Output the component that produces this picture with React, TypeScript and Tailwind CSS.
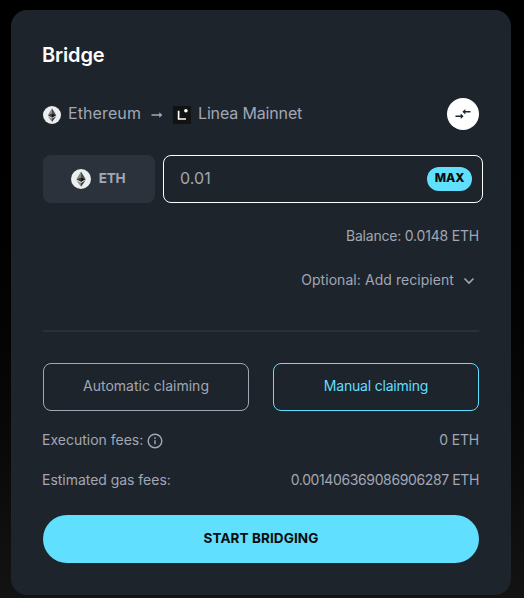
function EthIcon({ size }: { size: number }) {
  return (
    <svg width={size} height={size} viewBox="0 0 32 32" className="block shrink-0">
      <circle cx="16" cy="16" r="16" fill="#eceff0" />
      <path d="M16 4 8.5 16.4 16 13z" fill="#8a8a8a" />
      <path d="M16 4v9l7.5 3.4z" fill="#4a4a4a" />
      <path d="M8.5 16.4 16 13v7.9z" fill="#3c3c3b" />
      <path d="M16 13v7.9l7.5-4.5z" fill="#141414" />
      <path d="M8.5 18 16 22.3V28.5z" fill="#8a8a8a" />
      <path d="M23.5 18 16 22.3V28.5z" fill="#3c3c3b" />
    </svg>
  );
}

function LineaIcon() {
  return (
    <svg width="18" height="18" viewBox="0 0 18 18" className="block shrink-0">
      <rect width="18" height="18" fill="#121212" />
      <path d="M5.6 4.8v8.2h7.4" fill="none" stroke="#fff" strokeWidth="1.7" />
      <circle cx="12.9" cy="4.8" r="1.8" fill="#fff" />
    </svg>
  );
}

function Card() {
  return (
    <main className="h-[585px] w-[500px] rounded-2xl bg-[#1e242b] px-8 pt-8 text-[14px] leading-5 text-[#a1a7b6]">
      <h1 className="-ml-px h-[26px] text-[20px] leading-[26px] font-semibold tracking-[-0.15px] text-white">Bridge</h1>

      <div className="mt-[30px] flex h-8 items-center">
        <span className="pt-px"><EthIcon size={18} /></span>
        <span className="-mt-0.5 ml-[7px] w-[73px] text-[16px] tracking-[0.1px] whitespace-nowrap">Ethereum</span>
        <svg width="12" height="8" viewBox="0 0 12 8" className="mt-px ml-[10px] shrink-0" fill="currentColor">
          <path d="M.5 3.3h7.8V1.3L11.4 4 8.3 6.7V4.7H.5z" />
        </svg>
        <span className="ml-[10px] pt-px"><LineaIcon /></span>
        <span className="-mt-0.5 ml-[7px] text-[16px] tracking-[-0.15px] whitespace-nowrap">Linea Mainnet</span>
        <button className="ml-auto flex size-8 items-center justify-center rounded-full bg-white text-[#1e242b]">
          <svg width="16" height="16" viewBox="0 0 16 16" fill="none" stroke="currentColor" strokeWidth="1.5">
            <path d="M.5 10.3h6M15.5 5.7h-6" />
            <path d="M5.7 7.5v5.6l2.9-2.8zM10.3 2.9v5.6L7.4 5.7z" fill="currentColor" stroke="none" />
          </svg>
        </button>
      </div>

      <div className="mt-[25px] -mr-1 flex h-12 gap-2">
        <div className="flex w-28 items-center justify-center gap-2 rounded-lg bg-[#2c323b] pr-0.5 font-bold">
          <EthIcon size={20} />
          <span className="-mt-0.5 text-[13.5px] tracking-[-0.2px]">ETH</span>
        </div>
        <div className="flex flex-1 items-center justify-between rounded-lg border border-white pr-[10px] pl-4">
          <span className="-mt-0.5 text-[16px] tracking-[0.1px]">0.01</span>
          <button className="h-6 w-[45px] rounded-full bg-[#61dfff] pb-0.5 text-[12px] font-extrabold tracking-[-0.1px] text-[#0b0b0b]">MAX</button>
        </div>
      </div>

      <p className="mt-[23px] text-right tracking-[-0.2px]">Balance: 0.0148 ETH</p>
      <div className="mt-6 flex h-5 items-center justify-end pr-1">
        <span className="tracking-[0.06px]">Optional: Add recipient</span>
        <svg width="12" height="8" viewBox="0 0 12 8" fill="none" stroke="currentColor" strokeWidth="1.6" className="mt-0.5 ml-[9px]">
          <path d="m1.5 1.5 4.5 4.5 4.5-4.5" />
        </svg>
      </div>
      <hr className="mt-10 border-t-2 border-[#2c3038]" />

      <div className="mt-[31px] flex h-12 gap-6">
        <button className="flex-1 rounded-lg border border-[#a1a7b6] pb-0.5">Automatic claiming</button>
        <button className="flex-1 rounded-lg border border-[#61dfff] pb-0.5 tracking-[-0.2px] text-[#61dfff]">Manual claiming</button>
      </div>

      <div className="mt-[19px] flex h-5 items-center justify-between">
        <span className="-ml-px flex items-center">
          <span>Execution fees:</span>
          <svg width="16" height="16" viewBox="0 0 16 16" fill="none" stroke="currentColor" strokeWidth="1.4" className="mt-0.5 ml-1">
            <circle cx="8" cy="8" r="6.8" />
            <path d="M8 7.2v4.1M8 4.3v1.6" />
          </svg>
        </span>
        <span className="tracking-[-0.2px]">0 ETH</span>
      </div>
      <div className="mt-5 flex h-5 items-center justify-between">
        <span className="-ml-px tracking-[-0.03px]">Estimated gas fees:</span>
        <span className="tracking-[-0.38px]">0.001406369086906287 ETH</span>
      </div>
      <button className="mt-[25px] h-12 w-full rounded-full bg-[#61dfff] pb-[3px] text-[13.5px] font-bold tracking-[0.1px] text-[#0b0b0b]">START BRIDGING</button>
    </main>
  );
}

export default function App() {
  return (
    <div className="h-[598px] w-[524px] overflow-hidden bg-linear-to-b from-black to-[#131313] pt-[10px] pl-[11px] font-['Inter','Liberation_Sans',sans-serif]">
      <Card />
    </div>
  );
}
